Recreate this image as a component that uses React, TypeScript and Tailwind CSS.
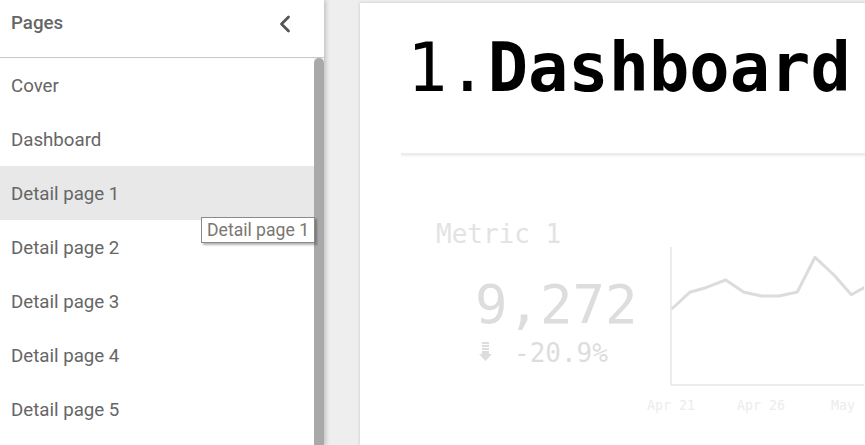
import { ChevronLeft } from 'lucide-react'

const pages = ['Cover', 'Dashboard', 'Detail page 1', 'Detail page 2', 'Detail page 3', 'Detail page 4', 'Detail page 5']

const points = [
  [672.7, 309], [690.7, 292.3], [706.7, 287.7], [726.7, 280], [745, 292.3], [762.7, 296],
  [780, 296], [798.3, 292], [816, 257.3], [835, 275], [852.3, 294.7], [870, 285],
]

function Sidebar() {
  return (
    <aside className="relative z-10 flex h-full w-[324px] shrink-0 flex-col bg-white shadow-[2px_0_4px_rgba(0,0,0,0.18)]">
      <div className="flex h-[58px] shrink-0 items-start justify-between border-b border-[#c8c8c8] pl-[11px] pr-[29px] pt-[9px]">
        <span className="text-[18.7px] font-medium text-[#666]">Pages</span>
        <ChevronLeft className="-mr-[4px] mt-[1px] h-[28px] w-[28px] text-[#555]" strokeWidth={2.4} />
      </div>
      <div className="flex min-h-0 flex-1">
        <ul className="flex-1">
          {pages.map((p) => (
            <li
              key={p}
              className={`flex h-[54px] items-center pl-[11px] pt-[2px] text-[18.7px] text-[#666] ${p === 'Detail page 1' ? 'bg-[#e8e8e8]' : ''}`}
            >
              {p}
            </li>
          ))}
        </ul>
        <div className="w-[10px] shrink-0 bg-[#f1f1f1]">
          <div className="h-full rounded-t-[5px] bg-[#a9a9a9]" />
        </div>
      </div>
      <div className="absolute left-[201px] top-[217px] flex h-[26px] items-center border border-[#8a8a8a] bg-white px-[5px] text-[17.6px] text-[#7a7670] shadow-[2px_2px_2px_rgba(0,0,0,0.3)]">
        Detail page 1
      </div>
    </aside>
  )
}

function DownIcon() {
  return (
    <svg width="13" height="20" viewBox="0 0 13 20" className="mt-[3px]">
      <rect x="3" y="0" width="7" height="2" fill="#ddd" />
      <rect x="3" y="3" width="7" height="2" fill="#ddd" />
      <rect x="3" y="6" width="7" height="2" fill="#ddd" />
      <path d="M3 9 H10 V12 H13 L6.5 19 L0 12 H3 Z" fill="#ddd" />
    </svg>
  )
}

function Chart() {
  const ox = 640
  const oy = 240
  const d = points.map(([x, y], i) => `${i ? 'L' : 'M'}${x - ox} ${y - oy}`).join(' ')
  return (
    <svg width="225" height="180" viewBox="0 0 225 180" className="mt-[23px] shrink-0">
      <line x1="32" y1="7" x2="32" y2="145" stroke="#e6e6e6" strokeWidth="1.5" />
      <line x1="32" y1="145" x2="240" y2="145" stroke="#e6e6e6" strokeWidth="1.5" />
      <path d={d} fill="none" stroke="#dcdcdc" strokeWidth="3" strokeLinejoin="round" />
      <g fill="#ececec" fontSize="13.3" fontFamily="'DejaVu Sans Mono', monospace" textAnchor="middle">
        <text x="32" y="170">Apr 21</text>
        <text x="122" y="170">Apr 26</text>
        <text x="192" y="170" textAnchor="start">May</text>
      </g>
    </svg>
  )
}

export default function App() {
  return (
    <div className="flex h-[445px] w-[865px] overflow-hidden bg-[#eeeeee] font-['Roboto',sans-serif]">
      <Sidebar />
      <main className="flex min-w-0 flex-1 pl-[36px] pt-[3px]">
        <section className="flex h-full min-w-0 flex-1 flex-col bg-white pl-[41px] shadow-[0_0_3px_rgba(0,0,0,0.18)] font-['DejaVu_Sans_Mono',monospace]">
          <h1 className="ml-[6px] mt-[26px] whitespace-nowrap text-[67px] leading-[78px] text-black">
            1.<span className="font-bold">Dashboard</span>
          </h1>
          <div className="mt-[46px] h-[2px] shrink-0 bg-[#ececec] shadow-[0_1px_2px_rgba(0,0,0,0.08)]" />
          <div className="mt-[62px] flex">
            <div className="w-[238px] shrink-0 pl-[33px]">
              <div className="mt-[2px] pl-[2px] text-[26px] leading-[30px] text-[#e3e3e3]">Metric 1</div>
              <div className="mt-[28px] pl-[41px] text-[54px] leading-[56px] text-[#dddddd]">9,272</div>
              <div className="flex items-start gap-[22px] pl-[45px] pt-[6px] text-[26px] leading-[28px] text-[#dddddd]">
                <DownIcon />
                <span>-20.9%</span>
              </div>
            </div>
            <Chart />
          </div>
        </section>
      </main>
    </div>
  )
}
